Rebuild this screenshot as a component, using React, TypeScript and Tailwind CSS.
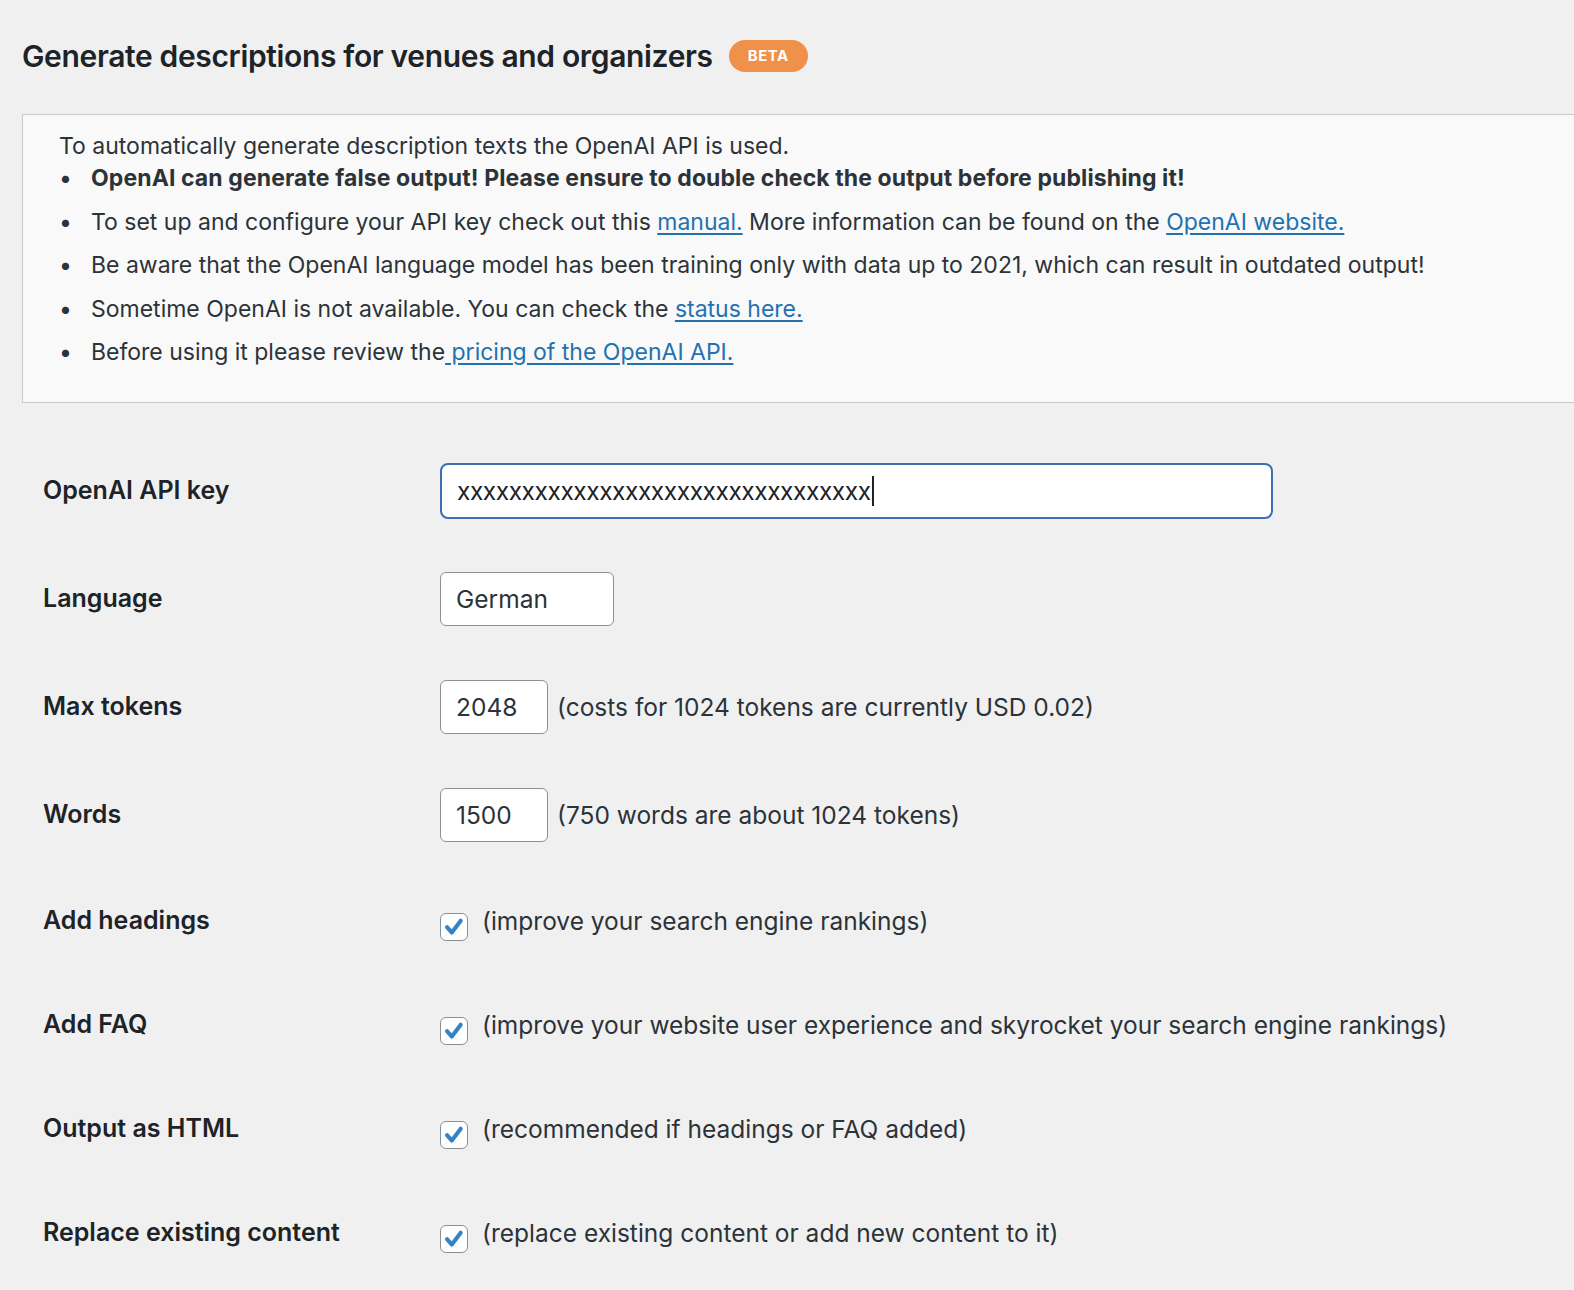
import React from 'react';

function Check() {
  return (
    <span className="mt-[12px] flex h-[28px] w-[28px] shrink-0 items-center justify-center rounded-[6px] border border-[#8c8f94] bg-white">
      <svg viewBox="0 0 20 20" className="h-[24px] w-[24px]">
        <path d="M4.2 10.2 L8.2 14.6 L15.6 4.8" fill="none" stroke="#3582c4" strokeWidth="3.4" strokeLinecap="round" strokeLinejoin="round" />
      </svg>
    </span>
  );
}

function Row({ label, tall, children }: { label: string; tall?: boolean; children: React.ReactNode }) {
  return (
    <div className={`grid grid-cols-[396px_1fr] items-center ${tall ? 'h-[108px]' : 'h-[104px]'}`}>
      <div className="text-[25px] font-semibold text-[#1d2327]">{label}</div>
      <div className="ml-[1px] flex items-center text-[24.5px]">{children}</div>
    </div>
  );
}

export default function App() {
  return (
    <div className="min-h-screen bg-[#f0f0f1] font-['Inter','Noto_Sans',sans-serif] text-[23px] text-[#2c3338]">
      <div className="flex items-center gap-[16px] pl-[22px] pt-[38px]">
        <h2 className="text-[30px] font-semibold leading-[36px] tracking-[-0.35px] text-[#1d2327]">
          Generate descriptions for venues and organizers
        </h2>
        <span className="rounded-full bg-[#f0914a] px-[19px] py-[5px] text-[15px] font-bold leading-[22px] tracking-[0.5px] text-white">
          BETA
        </span>
      </div>

      {/* Notice */}
      <div className="ml-[22px] mt-[40px] border border-r-0 border-[#c9cacc] bg-[#f9f9f9] pb-[34px] pl-[36px] pt-[15px]">
        <p className="leading-[32px]">To automatically generate description texts the OpenAI API is used.</p>
        <ul className="flex flex-col gap-[11.5px]">
          <li className="flex leading-[32px]">
            <span className="w-[32px]">•</span>
            <strong className="font-bold tracking-[0.1px]">OpenAI can generate false output! Please ensure to double check the output before publishing it!</strong>
          </li>
          <li className="flex leading-[32px]">
            <span className="w-[32px]">•</span>
            <span>
              To set up and configure your API key check out this{' '}
              <a className="text-[#2271b1] underline underline-offset-[3px]">manual.</a> More information can be found on the{' '}
              <a className="text-[#2271b1] underline underline-offset-[3px]">OpenAI website.</a>
            </span>
          </li>
          <li className="flex leading-[32px]">
            <span className="w-[32px]">•</span>
            <span>Be aware that the OpenAI language model has been training only with data up to 2021, which can result in outdated output!</span>
          </li>
          <li className="flex leading-[32px]">
            <span className="w-[32px]">•</span>
            <span>
              Sometime OpenAI is not available. You can check the{' '}
              <a className="text-[#2271b1] underline underline-offset-[3px]">status here.</a>
            </span>
          </li>
          <li className="flex leading-[32px]">
            <span className="w-[32px]">•</span>
            <span>
              Before using it please review the
              <a className="text-[#2271b1] underline underline-offset-[3px]"> pricing of the OpenAI API.</a>
            </span>
          </li>
        </ul>
      </div>

      {/* Form */}
      <div className="mt-[34px] pl-[43px]">
        <Row label="OpenAI API key" tall>
          <div className="flex h-[56px] w-[833px] items-center rounded-[8px] border-2 border-[#3a6fb0] bg-white px-[15px] tracking-[-0.45px] text-[#1d2327]">
            xxxxxxxxxxxxxxxxxxxxxxxxxxxxxxxx
            <span className="ml-[1px] h-[30px] w-[2px] bg-[#1d2327]" />
          </div>
        </Row>
        <Row label="Language" tall>
          <div className="flex h-[54px] w-[174px] items-center rounded-[6px] border border-[#8c8f94] bg-white px-[15px] text-[#2c3338]">
            German
          </div>
        </Row>
        <Row label="Max tokens" tall>
          <div className="flex h-[54px] w-[108px] items-center rounded-[6px] border border-[#8c8f94] bg-white px-[15px] text-[#2c3338]">
            2048
          </div>
          <span className="ml-[9px]">(costs for 1024 tokens are currently USD 0.02)</span>
        </Row>
        <Row label="Words" tall>
          <div className="flex h-[54px] w-[108px] items-center rounded-[6px] border border-[#8c8f94] bg-white px-[15px] text-[#2c3338]">
            1500
          </div>
          <span className="ml-[9px]">(750 words are about 1024 tokens)</span>
        </Row>
        <Row label="Add headings">
          <Check />
          <span className="ml-[14px]">(improve your search engine rankings)</span>
        </Row>
        <Row label="Add FAQ">
          <Check />
          <span className="ml-[14px]">(improve your website user experience and skyrocket your search engine rankings)</span>
        </Row>
        <Row label="Output as HTML">
          <Check />
          <span className="ml-[14px]">(recommended if headings or FAQ added)</span>
        </Row>
        <Row label="Replace existing content">
          <Check />
          <span className="ml-[14px]">(replace existing content or add new content to it)</span>
        </Row>
      </div>
    </div>
  );
}
